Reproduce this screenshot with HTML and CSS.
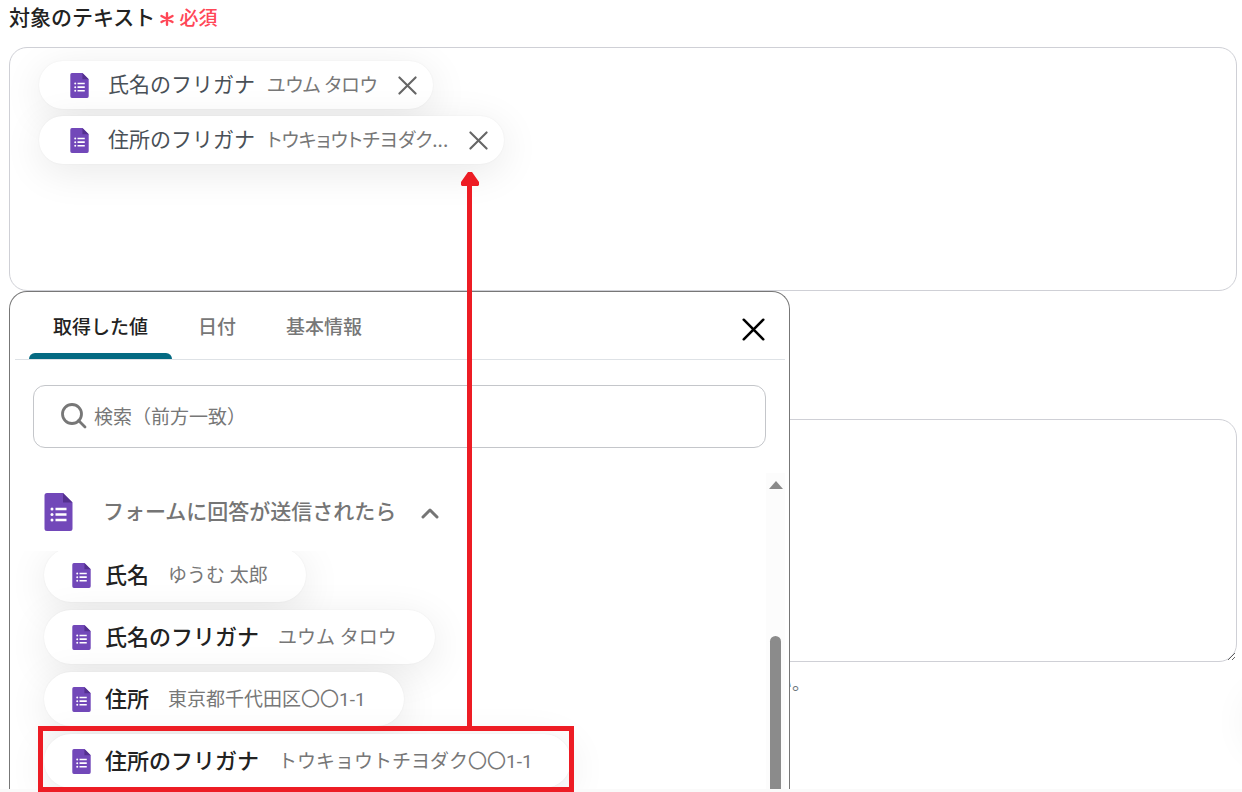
FILE: index.html
```html
<!DOCTYPE html>
<html lang="ja">

<head>
  <meta charset="UTF-8">
  <title>対象のテキスト</title>
  <meta name="viewport" content="width=device-width, initial-scale=1.0">
  <link rel="stylesheet" href="styles.css">
</head>

<body>

  <svg width="0" height="0" class="sprite" aria-hidden="true">
    <symbol id="form-icon" viewBox="0 0 28 38">
      <path d="M2.500 0H18.500L28 9.500V35.500A2.500 2.500 0 0 1 25.500 38H2.500A2.500 2.500 0 0 1 0 35.500V2.500A2.500 2.500 0 0 1 2.500 0Z" fill="#7248b9" />
      <path d="M18.500 0L28 9.500H18.500Z" fill="#54308f" />
      <g fill="#fff">
        <circle cx="7.500" cy="16" r="1.500" />
        <circle cx="7.500" cy="21.500" r="1.500" />
        <circle cx="7.500" cy="27" r="1.500" />
        <path d="M11 14.800h11v2.400H11zM11 20.300h11v2.400H11zM11 25.800h11v2.400H11z" />
      </g>
    </symbol>
    <symbol id="close-icon" viewBox="0 0 20 20">
      <path d="M1.500 1.500L18.500 18.500M18.500 1.500L1.500 18.500" fill="none" stroke="currentColor" stroke-width="2.200" stroke-linecap="round" />
    </symbol>
  </svg>

  <main class="page">
    <h1 class="field-title">対象のテキスト
      <span class="required">
        <svg width="14" height="14" viewBox="0 0 14 14" aria-hidden="true">
          <path d="M7 1.200V12.800M1.500 4L12.500 10M12.500 4L1.500 10" stroke="currentColor" stroke-width="2.400" stroke-linecap="round" />
        </svg>必須
      </span>
    </h1>

    <div class="target-box">
      <div class="chip chip-selected">
        <svg class="form-icon"><use href="#form-icon" /></svg>
        <span class="chip-name">氏名のフリガナ</span>
        <span class="chip-value">ユウム タロウ</span>
        <button class="chip-remove" aria-label="削除"><svg><use href="#close-icon" /></svg></button>
      </div>
      <div class="chip chip-selected">
        <svg class="form-icon"><use href="#form-icon" /></svg>
        <span class="chip-name">住所のフリガナ</span>
        <span class="chip-value">トウキョウトチヨダク...</span>
        <button class="chip-remove" aria-label="削除"><svg><use href="#close-icon" /></svg></button>
      </div>
    </div>

    <textarea class="text-area" aria-label="テキスト"></textarea>
    <p class="help">い。</p>

    <section class="panel">
      <header class="panel-header">
        <nav class="tabs">
          <button class="tab active">取得した値</button>
          <button class="tab">日付</button>
          <button class="tab">基本情報</button>
        </nav>
        <button class="panel-close" aria-label="閉じる"><svg><use href="#close-icon" /></svg></button>
      </header>

      <label class="search">
        <svg width="26" height="26" viewBox="0 0 26 26" aria-hidden="true">
          <circle cx="11" cy="11" r="9.500" fill="none" stroke="currentColor" stroke-width="2.800" />
          <path d="M17.500 17.500L24 24" stroke="currentColor" stroke-width="2.800" stroke-linecap="round" />
        </svg>
        <input type="text" placeholder="検索（前方一致）" aria-label="検索（前方一致）">
      </label>

      <div class="results">
        <div class="results-body">
          <button class="group">
            <svg class="group-icon"><use href="#form-icon" /></svg>
            <span class="group-name">フォームに回答が送信されたら</span>
            <svg class="chevron" viewBox="0 0 18 12"><path d="M2 10L9 3L16 10" fill="none" stroke="currentColor" stroke-width="3" stroke-linecap="round" stroke-linejoin="round" /></svg>
          </button>
          <div class="options">
            <button class="chip option">
              <svg class="form-icon"><use href="#form-icon" /></svg>
              <span class="chip-name">氏名</span>
              <span class="chip-value">ゆうむ 太郎</span>
            </button>
            <button class="chip option">
              <svg class="form-icon"><use href="#form-icon" /></svg>
              <span class="chip-name">氏名のフリガナ</span>
              <span class="chip-value">ユウム タロウ</span>
            </button>
            <button class="chip option">
              <svg class="form-icon"><use href="#form-icon" /></svg>
              <span class="chip-name">住所</span>
              <span class="chip-value">東京都千代田区〇〇1-1</span>
            </button>
            <button class="chip option">
              <svg class="form-icon"><use href="#form-icon" /></svg>
              <span class="chip-name">住所のフリガナ</span>
              <span class="chip-value">トウキョウトチヨダク〇〇1-1</span>
            </button>
          </div>
        </div>
        <div class="scrollbar">
          <svg width="14" height="8" viewBox="0 0 14 8"><path d="M0 8L7 0L14 8Z" fill="#8a8a8a" /></svg>
          <div class="thumb"></div>
        </div>
      </div>
    </section>

    <div class="side-button"></div>
  </main>

  <!-- annotation -->
  <div class="highlight"></div>
  <svg class="arrow" width="18" height="556" viewBox="0 0 18 556" aria-hidden="true">
    <path d="M7 0H11L18 10V13L17 14H11V556H6V14H1L0 13V10Z" fill="#ed1c24" />
  </svg>

</body>

</html>
```
FILE: styles.css
```css
:root {
  --text: #222;
  --muted: #777;
  --border: #cfd0d6;
  --accent: #046a82;
  --red: #ed1c24;
}

* {
  box-sizing: border-box;
  margin: 0;
  padding: 0;
}

body {
  font-family: "Noto Sans CJK JP", sans-serif;
  color: var(--text);
  background: #fafafa;
  height: 100vh;
  overflow: hidden;
}

button {
  font: inherit;
  color: inherit;
  background: none;
  border: none;
  cursor: pointer;
}

.sprite {
  position: absolute;
}

.page {
  position: relative;
  height: calc(100vh - 3px);
  padding: 0 5px 0 9px;
  background: #fff;
  overflow: hidden;
}

.field-title {
  display: flex;
  align-items: center;
  gap: 5px;
  height: 32px;
  margin-bottom: 15px;
  font-size: 21px;
  font-weight: 500;
}

.required {
  display: flex;
  align-items: center;
  gap: 5px;
  font-size: 19px;
  color: #ff4757;
}

.required svg {
  margin-top: 5px;
}

.target-box {
  display: flex;
  flex-direction: column;
  align-items: flex-start;
  gap: 7px;
  height: 244px;
  padding: 13px 29px;
  border: 1px solid var(--border);
  border-radius: 18px;
  overflow: hidden;
}

.chip {
  display: flex;
  align-items: center;
  border-radius: 27px;
  background: #fff;
  box-shadow: 0 8px 40px rgba(0, 0, 0, 0.09), 0 0 2px rgba(0, 0, 0, 0.06);
  white-space: nowrap;
}

.chip-name,
.chip-value {
  padding-bottom: 4px;
}

.form-icon {
  width: 19px;
  height: 25px;
}

.chip-value {
  font-size: 19px;
  color: var(--muted);
}

.chip-selected {
  height: 48px;
  padding: 0 16px 0 31px;
  font-size: 21px;
  color: #495057;
}

.chip-selected .chip-name {
  margin: 0 12px 0 19px;
}

.chip-selected .chip-value {
  font-feature-settings: "palt";
}

.chip-remove {
  display: flex;
  margin-left: 21px;
  color: #666;
}

.chip-remove svg {
  width: 19px;
  height: 19px;
}

.text-area {
  display: block;
  width: 100%;
  height: 243px;
  margin-top: 128px;
  border: 1px solid var(--border);
  border-radius: 18px;
  resize: vertical;
}

.help {
  padding: 7px 0 0 765px;
  font-size: 18px;
  line-height: 27px;
  color: #6c757d;
}

.panel {
  position: absolute;
  top: 291px;
  left: 9px;
  width: 781px;
  max-width: 100%;
  padding: 0 4px 0 5px;
  border: 1px solid #777;
  border-bottom: none;
  border-radius: 18px 18px 0 0;
  background: #fff;
}

.panel-header {
  display: flex;
  justify-content: space-between;
  align-items: center;
  height: 68px;
  padding: 0 20px 0 14px;
  border-bottom: 1px solid #dee2e6;
}

.tabs {
  display: flex;
  gap: 2px;
  height: 67px;
}

.tab {
  padding: 5px 24px 0;
  border-bottom: 6px solid transparent;
  font-size: 19px;
  font-weight: 500;
  color: var(--muted);
}

.tab.active {
  position: relative;
  color: var(--text);
}

.tab.active::after {
  content: "";
  position: absolute;
  left: 0;
  right: 0;
  bottom: -6px;
  height: 6px;
  border-radius: 6px 6px 0 0;
  background: var(--accent);
}

.panel-close {
  display: flex;
  padding-top: 8px;
  color: #000;
}

.panel-close svg {
  width: 23px;
  height: 23px;
}

.search {
  display: flex;
  align-items: center;
  gap: 7px;
  height: 63px;
  margin: 25px 19px 25px 18px;
  padding: 0 26px 2px 27px;
  border: 1px solid #c4c6ca;
  border-radius: 12px;
  color: var(--muted);
}

.search input {
  flex: 1;
  border: none;
  outline: none;
  font: inherit;
  font-size: 19px;
}

.search input::placeholder {
  color: var(--muted);
}

.results {
  display: flex;
}

.results-body {
  flex: 1;
}

.group {
  display: flex;
  align-items: center;
  height: 78px;
  padding: 0 0 0 29px;
  font-size: 21px;
  font-weight: 500;
  color: #757575;
}

.group-icon {
  width: 29px;
  height: 38px;
  margin-right: 30px;
}

.group-name {
  padding-bottom: 4px;
}

.chevron {
  width: 18px;
  height: 12px;
  margin: 2px 0 0 25px;
}

.options {
  display: flex;
  flex-direction: column;
  align-items: flex-start;
  gap: 8px;
  height: 246px;
  padding-left: 29px;
  overflow: hidden;
}

.option {
  flex-shrink: 0;
  height: 54px;
  padding: 0 38px 0 28px;
}

.option:first-child {
  margin-top: -3px;
}

.option .chip-name {
  margin: 0 19px 0 14px;
  font-size: 22px;
  font-weight: 500;
}

.option .chip-value {
  font-family: Roboto, "Noto Sans CJK JP", sans-serif;
}

.scrollbar {
  display: flex;
  flex-direction: column;
  align-items: center;
  width: 19px;
  padding-top: 8px;
  background: #fcfcfc;
}

.thumb {
  flex: 1;
  width: 11px;
  margin-top: 147px;
  border-radius: 6px 6px 0 0;
  background: #8b8b8b;
}

.side-button {
  position: absolute;
  top: 692px;
  right: -66px;
  width: 60px;
  height: 60px;
  border-radius: 30px;
  box-shadow: 0 0 40px rgba(0, 0, 0, 0.07);
}

.highlight {
  position: absolute;
  top: 726px;
  left: 38px;
  width: 536px;
  height: 66px;
  border: 5px solid var(--red);
}

.arrow {
  position: absolute;
  top: 172px;
  left: 461px;
}
```
